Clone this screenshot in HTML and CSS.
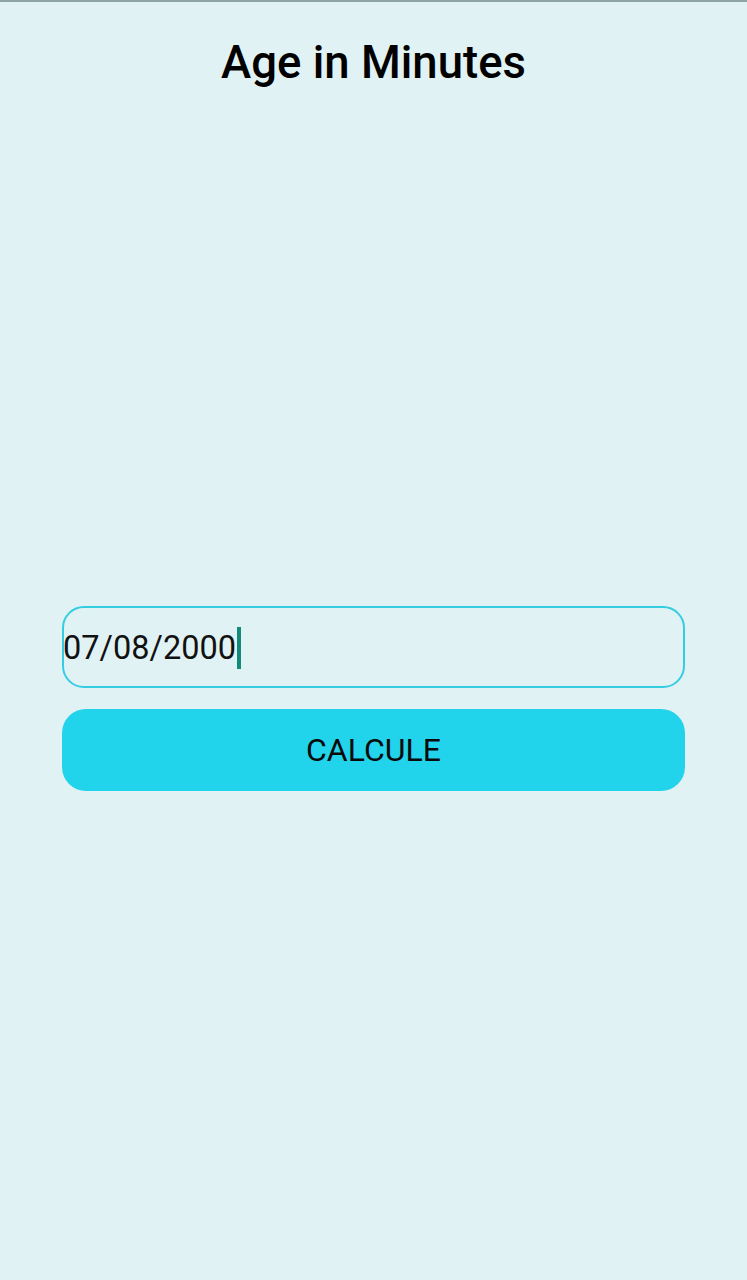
FILE: index.html
```html
<!DOCTYPE html>
<html>
<head>
<meta charset="utf-8">
<link rel="stylesheet" href="styles.css">
</head>
<body>
<div class="screen">
  <div class="topline"></div>
  <h1 class="title">Age in Minutes</h1>
  <div class="form">
    <div class="field"><span class="value">07/08/2000</span><span class="caret"></span></div>
    <div class="button">CALCULE</div>
  </div>
</div>
</body>
</html>
```
FILE: styles.css
```css
html, body {
  margin: 0;
  padding: 0;
  background: #e0f2f4;
}
.screen {
  width: 747px;
  height: 1280px;
  background: #e0f2f4;
  font-family: Roboto, "Noto Sans", sans-serif;
  display: flex;
  flex-direction: column;
  align-items: center;
  overflow: hidden;
}
.topline {
  align-self: stretch;
  height: 2px;
  background: #8fa4a4;
}
.title {
  margin: 34px 0 0 0;
  font-size: 45.5px;
  line-height: 54px;
  font-weight: 500;
  color: #000;
}
.form {
  margin-top: 516px;
  width: 623px;
  display: flex;
  flex-direction: column;
  gap: 21px;
}
.field {
  box-sizing: border-box;
  height: 82px;
  border: 2px solid #33cde2;
  border-radius: 22px;
  display: flex;
  align-items: center;
  padding-left: 0;
  padding-top: 2px;
}
.value {
  font-size: 32.5px;
  color: #111;
  line-height: 40px;
  margin-left: -1px;
}
.caret {
  width: 4px;
  height: 42px;
  background: #13897a;
  margin-left: 1px;
}
.button {
  height: 82px;
  border-radius: 24px;
  background: #22d3ec;
  display: flex;
  align-items: center;
  justify-content: center;
  font-size: 32px;
  color: #0a0a0a;
}
```
